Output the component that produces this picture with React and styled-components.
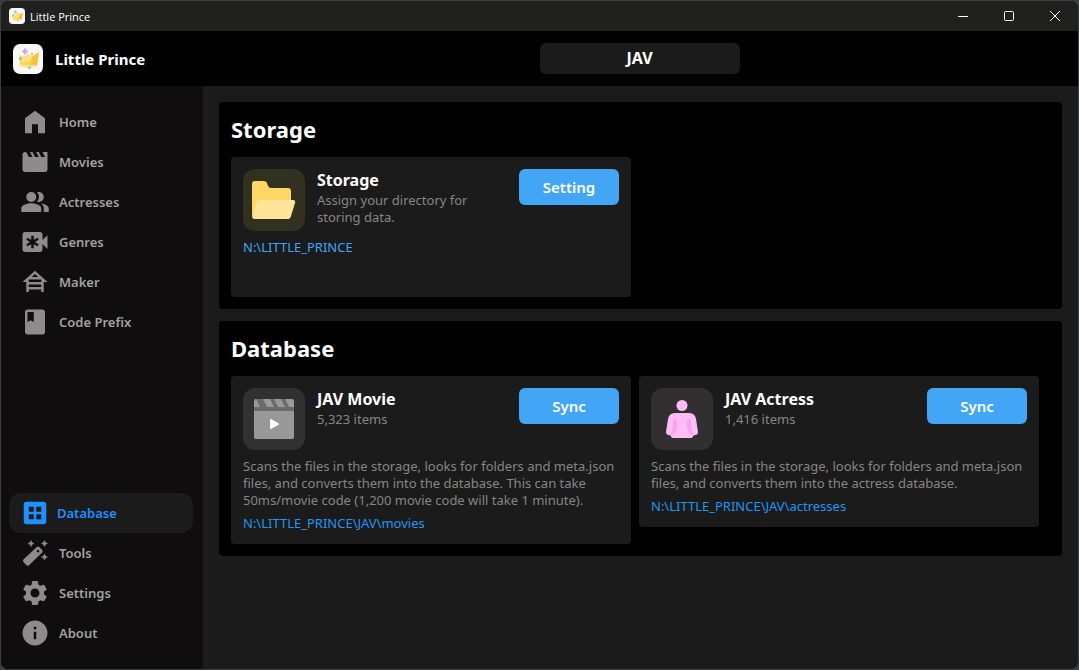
import React from "react";
import styled, { createGlobalStyle } from "styled-components";
import {
  MdMovieCreation,
  MdPeopleAlt,
  MdEmergencyRecording,
  MdHouseSiding,
  MdClass,
  MdDataset,
  MdSettings,
  MdInfo,
} from "react-icons/md";

const GlobalStyle = createGlobalStyle`
  *, *::before, *::after { box-sizing: border-box; }
  html, body, #root { height: 100%; }
  body {
    margin: 0;
    background: #3b3f41;
    color: #ffffff;
    font-family: "Noto Sans", "Open Sans", sans-serif;
    font-size: 13px;
    line-height: 17px;
  }
  h1, h2, h3, p { margin: 0; }
  button { font: inherit; border: 0; padding: 0; cursor: pointer; }
  svg { display: block; flex: none; }
`;

const Window = styled.div`
  min-height: 100%;
  display: flex;
  flex-direction: column;
  border: 1px solid #3b3f41;
  border-radius: 8px;
  overflow: hidden;
  background: #1b1b1b;
`;

const TitleBar = styled.div`
  display: flex;
  align-items: center;
  height: 30px;
  padding-left: 8px;
  background: #20201e;
`;

const WindowTitle = styled.span`
  flex: 1;
  margin-left: 5px;
  font-family: "Open Sans", sans-serif;
  font-size: 11px;
`;

const WindowButton = styled.button`
  width: 46px;
  height: 30px;
  display: grid;
  place-items: center;
  background: transparent;
  color: #ffffff;
`;

const Header = styled.header`
  display: flex;
  align-items: center;
  height: 55px;
  background: #000000;
`;

const Brand = styled.div`
  display: flex;
  align-items: center;
  gap: 12px;
  width: 200px;
  padding-left: 12px;
`;

const BrandName = styled.h1`
  font-size: 15px;
  line-height: 20px;
  font-weight: 700;
`;

const HeaderCenter = styled.div`
  flex: 1;
  display: flex;
  justify-content: center;
`;

const CategoryButton = styled.button`
  width: 200px;
  height: 31px;
  border-radius: 6px;
  background: #1b1b1b;
  color: #ffffff;
  font-size: 16px;
  font-weight: 700;
`;

const Body = styled.div`
  flex: 1;
  display: flex;
`;

const Sidebar = styled.nav`
  width: 202px;
  flex: none;
  display: flex;
  flex-direction: column;
  justify-content: space-between;
  padding: 16px 10px 16px 8px;
  background: #0f0d0e;
`;

const NavGroup = styled.div`
  display: flex;
  flex-direction: column;
`;

const NavLink = styled.a`
  display: flex;
  align-items: center;
  gap: ${(p) => (p.$active ? "7px" : "9px")};
  height: 40px;
  padding-left: 11px;
  border-radius: 12px;
  background: ${(p) => (p.$active ? "#1b1b1b" : "transparent")};
  color: ${(p) => (p.$active ? "#1e90ff" : "#a3a1a2")};
  font-weight: 600;
  text-decoration: none;

  svg { color: ${(p) => (p.$active ? "#1e90ff" : "#8d8b8c")}; }
`;

const Main = styled.main`
  flex: 1;
  min-width: 0;
  display: flex;
  flex-direction: column;
  gap: 12px;
  padding: 16px;
`;

const Panel = styled.section`
  padding: 12px;
  border-radius: 4px;
  background: #000000;
`;

const PanelTitle = styled.h2`
  margin-bottom: 12px;
  font-size: 22px;
  line-height: 31px;
  font-weight: 700;
`;

const CardRow = styled.div`
  display: flex;
  flex-wrap: wrap;
  align-items: flex-start;
  gap: 8px;
`;

const Card = styled.article`
  width: 400px;
  min-height: ${(p) => (p.$tall ? "140px" : "0")};
  display: flex;
  flex-direction: column;
  gap: 8px;
  padding: 12px;
  border-radius: 4px;
  background: #1b1b1b;
`;

const CardTop = styled.div`
  display: flex;
  align-items: flex-start;
  gap: 12px;
`;

const IconTile = styled.div`
  width: 62px;
  height: 62px;
  flex: none;
  border-radius: 12px;
  background: ${(p) => p.$color};
`;

const CardHeading = styled.div`
  flex: 1;
`;

const CardTitle = styled.h3`
  font-size: 16px;
  line-height: 23px;
  font-weight: 700;
`;

const Muted = styled.p`
  color: #868686;
`;

const ActionButton = styled.button`
  width: 100px;
  height: 36px;
  margin-left: 32px;
  border-radius: 6px;
  background: #42a5f5;
  color: #ffffff;
  font-size: 15px;
  font-weight: 600;
`;

const CardText = styled.div`
  display: flex;
  flex-direction: column;
  gap: 6px;
`;

const PathLink = styled.a`
  color: ${(p) => (p.$light ? "#42a5f5" : "#2196f3")};
  text-decoration: none;
`;

function CrownLogo({ size }) {
  return (
    <svg width={size} height={size} viewBox="0 0 30 30" aria-hidden="true">
      <rect width="30" height="30" rx="7" fill="#f7f7f7" />
      <path d="M6 11l5 2 4-3 4 3 7-5-2 14q-8 3-17 0z" fill="#ffd54a" />
      <path d="M19 13l7-5-2 13q-3 2-6 1z" fill="#f9c334" />
      <path d="M6 11l5 2 4-3 4 3-3 5-8 0z" fill="#ffe083" />
      <path d="M7 20q8 3 17 0v2q-8 3-17 0z" fill="#ffe98f" />
      <path d="M12 4.500l1 2 2 1-2 1-1 2-1-2-2-1 2-1z" fill="#c9a9ee" stroke="#c9a9ee" />
      <circle cx="7.500" cy="14.500" r="1.600" fill="#65d6b0" />
      <circle cx="19" cy="10" r="1.200" fill="#f5b27a" />
      <circle cx="22.500" cy="20" r="1.400" fill="#f59bbb" />
      <circle cx="16.500" cy="23.500" r="1.600" fill="#8ccaf2" />
    </svg>
  );
}

function HomeIcon({ size }) {
  return (
    <svg width={size} height={size} viewBox="0 0 24 24" fill="currentColor" aria-hidden="true">
      <path d="M4 21V9l8-6 8 6v12h-5.600v-7.200H9.600V21z" />
    </svg>
  );
}

function WandIcon({ size }) {
  return (
    <svg width={size} height={size} viewBox="0 0 30 30" fill="currentColor" aria-hidden="true">
      <path
        fillRule="evenodd"
        d="M16.800 9q1.200-1.100 2.400 0l3 3q1.100 1.200 0 2.400L9 27.200q-1.200 1-2.400 0l-3.200-3.200q-1-1.200 0-2.400zM17.900 11.500l-1.500 1.500 1.700 1.700 1.500-1.500z"
      />
      <path d="M11 2.500l1 2 2 1-2 1-1 2-1-2-2-1 2-1zM24.500 2.500l1 2 2 1-2 1-1 2-1-2-2-1 2-1zM24.500 16l1 2 2 1-2 1-1 2-1-2-2-1 2-1z" stroke="currentColor" strokeWidth=".5" />
    </svg>
  );
}

function FolderArt() {
  return (
    <svg width="62" height="62" viewBox="0 0 62 62" aria-hidden="true">
      <path d="M12 12h9q2 0 3 2l1 3q1 2 3 2h17q3 0 3 3v25l-2 3H12q-3 0-3-3V15q0-3 3-3z" fill="#ffd766" />
      <path d="M16 31h34q3 0 2 3l-4 13q-1 3-4 3H12q-3 0-2-3l3-13q1-3 3-3z" fill="#ffe599" />
    </svg>
  );
}

function ClapperArt() {
  return (
    <svg width="62" height="62" viewBox="0 0 62 62" aria-hidden="true">
      <rect x="11" y="11" width="40" height="40" rx="3" fill="#6b6b6b" />
      <path d="M11 23h40v26q0 2-2 2H13q-2 0-2-2z" fill="#999999" />
      <path d="M11 19v-5q0-3 2-3l4 8zM20 11h7l4 8h-7zM31 11h7l4 8h-7zM42 11h7q2 0 2 3v5h-5z" fill="#999999" />
      <path d="M28 32v8l7-4z" fill="#ffffff" stroke="#ffffff" strokeWidth="2" strokeLinejoin="round" />
    </svg>
  );
}

function PersonArt() {
  return (
    <svg width="62" height="62" viewBox="0 0 62 62" aria-hidden="true">
      <circle cx="31" cy="17.500" r="5.500" fill="#ffbdf8" />
      <path d="M24 25h14q6 0 7 6l2 13q0 3-3 3l-2 1q0 2-3 2H23q-3 0-3-2l-2-1q-3 0-3-3l2-13q1-6 7-6z" fill="#ffbdf8" />
      <path d="M22 33q0-2 2-2t2 2v5q0 6-6 10l-1-1q4-5 3-14zM40 33q0-2-2-2t-2 2v5q0 6 6 10l1-1q-4-5-3-14z" fill="#ff9ff3" />
    </svg>
  );
}

function Nav({ icon: Icon, label, active }) {
  return (
    <NavLink href="#" $active={active} aria-current={active ? "page" : undefined}>
      <Icon size={30} />
      {label}
    </NavLink>
  );
}

function InfoCard({ art, tile, title, subtitle, action, description, path, tall, lightPath }) {
  return (
    <Card $tall={tall}>
      <CardTop>
        <IconTile $color={tile}>{art}</IconTile>
        <CardHeading>
          <CardTitle>{title}</CardTitle>
          <Muted>{subtitle}</Muted>
        </CardHeading>
        <ActionButton type="button">{action}</ActionButton>
      </CardTop>
      <CardText>
        {description && <Muted>{description}</Muted>}
        <PathLink href="#" $light={lightPath}>{path}</PathLink>
      </CardText>
    </Card>
  );
}

export default function App() {
  return (
    <>
      <GlobalStyle />
      <Window>
        <TitleBar>
          <CrownLogo size={16} />
          <WindowTitle>Little Prince</WindowTitle>
          <WindowButton type="button" aria-label="Minimize">
            <svg width="10" height="10" viewBox="0 0 10 10"><path d="M0 5.500h10" stroke="currentColor" /></svg>
          </WindowButton>
          <WindowButton type="button" aria-label="Maximize">
            <svg width="10" height="10" viewBox="0 0 10 10"><rect x=".5" y=".5" width="9" height="9" rx="1" fill="none" stroke="currentColor" /></svg>
          </WindowButton>
          <WindowButton type="button" aria-label="Close">
            <svg width="10" height="10" viewBox="0 0 10 10"><path d="M0 0l10 10M10 0L0 10" stroke="currentColor" /></svg>
          </WindowButton>
        </TitleBar>
        <Header>
          <Brand>
            <CrownLogo size={30} />
            <BrandName>Little Prince</BrandName>
          </Brand>
          <HeaderCenter>
            <CategoryButton type="button">JAV</CategoryButton>
          </HeaderCenter>
        </Header>
        <Body>
          <Sidebar>
            <NavGroup>
              <Nav icon={HomeIcon} label="Home" />
              <Nav icon={MdMovieCreation} label="Movies" />
              <Nav icon={MdPeopleAlt} label="Actresses" />
              <Nav icon={MdEmergencyRecording} label="Genres" />
              <Nav icon={MdHouseSiding} label="Maker" />
              <Nav icon={MdClass} label="Code Prefix" />
            </NavGroup>
            <NavGroup>
              <Nav icon={MdDataset} label="Database" active />
              <Nav icon={WandIcon} label="Tools" />
              <Nav icon={MdSettings} label="Settings" />
              <Nav icon={MdInfo} label="About" />
            </NavGroup>
          </Sidebar>
          <Main>
            <Panel>
              <PanelTitle>Storage</PanelTitle>
              <CardRow>
                <InfoCard
                  tall
                  lightPath
                  art={<FolderArt />}
                  tile="#32301f"
                  title="Storage"
                  subtitle="Assign your directory for storing data."
                  action="Setting"
                  path={"N:\\LITTLE_PRINCE"}
                />
              </CardRow>
            </Panel>
            <Panel>
              <PanelTitle>Database</PanelTitle>
              <CardRow>
                <InfoCard
                  art={<ClapperArt />}
                  tile="#313131"
                  title="JAV Movie"
                  subtitle="5,323 items"
                  action="Sync"
                  description="Scans the files in the storage, looks for folders and meta.json files, and converts them into the database. This can take 50ms/movie code (1,200 movie code will take 1 minute)."
                  path={"N:\\LITTLE_PRINCE\\JAV\\movies"}
                />
                <InfoCard
                  art={<PersonArt />}
                  tile="#312f30"
                  title="JAV Actress"
                  subtitle="1,416 items"
                  action="Sync"
                  description="Scans the files in the storage, looks for folders and meta.json files, and converts them into the actress database."
                  path={"N:\\LITTLE_PRINCE\\JAV\\actresses"}
                />
              </CardRow>
            </Panel>
          </Main>
        </Body>
      </Window>
    </>
  );
}
